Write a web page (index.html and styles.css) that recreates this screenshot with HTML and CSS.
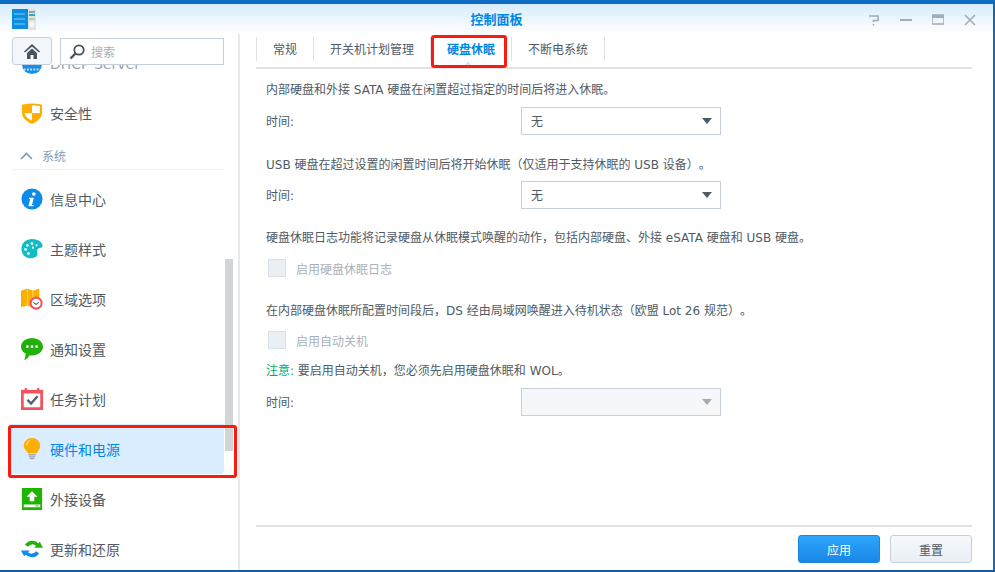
FILE: index.html
```html
<!DOCTYPE html>
<html lang="en">
<head>
    <meta charset="UTF-8">
    <meta name="viewport" content="width=device-width, initial-scale=1.0">
    <title>控制面板</title>
    <link rel="stylesheet" href="styles.css">
</head>
<body>
    <div class="window">
        <div class="titlebar">
            <svg class="app-icon" width="24" height="21" viewBox="0 0 24 21">
                <rect x="0" y="0" width="16" height="20" fill="#0a8fe0"/>
                <path d="M2 5h11M2 10h11M2 15h11" stroke="#7fd0f5" stroke-width="1"/>
                <rect x="16" y="0" width="8" height="21" fill="#dfe3e6"/>
                <path d="M17 3h6" stroke="#555" stroke-width="1"/>
                <path d="M17 6h6" stroke="#2aa6dd" stroke-width="2"/>
                <path d="M17 10h6" stroke="#8cc63f" stroke-width="1"/>
                <circle cx="20" cy="15.500" r="2.700" fill="#f4f6f7"/>
            </svg>
            <div class="title">控制面板</div>
            <div class="win-buttons">
                <svg width="12" height="12" viewBox="0 0 12 12"><path d="M1 2h9v4.500H5.500v1.500M5.500 10v1.500" fill="none" stroke="#a3abb3" stroke-width="1.500"/></svg>
                <svg width="12" height="12" viewBox="0 0 12 12"><path d="M0 6h12" stroke="#a3abb3" stroke-width="2"/></svg>
                <svg width="12" height="12" viewBox="0 0 12 12"><path d="M0 1h12v9H0z" fill="none" stroke="#a3abb3" stroke-width="1.500"/><path d="M0 2.500h12" stroke="#a3abb3" stroke-width="3"/></svg>
                <svg width="12" height="12" viewBox="0 0 12 12"><path d="M1 1l10 10M11 1L1 11" stroke="#a3abb3" stroke-width="1.500"/></svg>
            </div>
        </div>
        <div class="main">
            <aside class="sidebar">
                <div class="toolbar">
                    <button class="home-btn">
                        <svg width="16" height="15" viewBox="0 0 16 15"><path d="M8 0L0 7.500l1 1L8 2.500l7 6 1-1zM3 9l5-4.500L13 9v6H9.500v-4h-3v4H3z" fill="#47525e"/></svg>
                    </button>
                    <div class="search">
                        <svg width="16" height="16" viewBox="0 0 16 16"><circle cx="10" cy="6" r="4.700" fill="none" stroke="#47525e" stroke-width="1.800"/><path d="M6.500 9.500L1.500 14.500" stroke="#47525e" stroke-width="2.400"/></svg>
                        <span>搜索</span>
                    </div>
                </div>
                <ul class="nav">
                    <li class="nav-item">
                        <svg class="nav-icon" viewBox="0 0 24 24"><circle cx="12" cy="12" r="11" fill="#1b8fe6"/><path d="M3 18h18" stroke="#bfe2fa" stroke-width="2" stroke-dasharray="2 1.500"/></svg>
                        <span class="nav-latin">DHCP Server</span>
                    </li>
                    <li class="nav-item nav-before-group">
                        <svg class="nav-icon" viewBox="0 0 24 24"><path d="M1 3q11-3 22 0v9q0 7-11 12Q1 19 1 12z" fill="#fcaf03"/><path d="M12 3.500q5.500 0 8.500 1.200V12h-8.500zM12 12v8.500Q4.500 17 3.800 12z" fill="#fff"/></svg>
                        <span>安全性</span>
                    </li>
                    <li class="nav-group">
                        <svg width="13" height="8" viewBox="0 0 13 8"><path d="M1 7l5.500-5.500L12 7" fill="none" stroke="#7e9bb3" stroke-width="1.600"/></svg>
                        <span>系统</span>
                    </li>
                    <li class="nav-item">
                        <svg class="nav-icon" viewBox="0 0 24 24"><circle cx="12" cy="12" r="11.500" fill="#0b8bea"/><circle cx="14" cy="6.500" r="2" fill="#fff"/><path d="M9 10.500h5l-2 8h2l-.5 1.500H8l2-8H8.500z" fill="#fff"/></svg>
                        <span>信息中心</span>
                    </li>
                    <li class="nav-item">
                        <svg class="nav-icon" viewBox="0 0 24 24"><path d="M12 1c6 0 11.500 3.500 11.500 7.500 0 3-5.500 2-6 4.500-.5 3 1.500 4.500-.5 7-2 2-4 2-7 2-5.500 0-9.500-4-9.500-10.500S6 1 12 1z" fill="#0fbdc4"/><circle cx="7" cy="8" r="1.500" fill="#fff"/><circle cx="12" cy="6" r="1.500" fill="#fff"/><circle cx="5" cy="12.500" r="1.500" fill="#fff"/><circle cx="13" cy="10.500" r="1.200" fill="#fff"/><circle cx="8" cy="17" r="1.500" fill="#fff"/><circle cx="17" cy="8" r="1.200" fill="#fff"/></svg>
                        <span>主题样式</span>
                    </li>
                    <li class="nav-item">
                        <svg class="nav-icon" viewBox="0 0 24 24"><path d="M0 3l7-2.500 6 2.500 7-2.500v10H13v11L7 19l-7 2z" fill="#fcaf03"/><path d="M7 .5V19M13 3v10" stroke="#ffd66b" stroke-width="1"/><circle cx="16.500" cy="16.500" r="6" fill="#fff" stroke="#f2545b" stroke-width="2.200"/><path d="M13.500 15.500L16.500 18 19.500 15.500" fill="none" stroke="#6a7682" stroke-width="1.300"/></svg>
                        <span>区域选项</span>
                    </li>
                    <li class="nav-item">
                        <svg class="nav-icon" viewBox="0 0 24 24"><path d="M12 0c6.500 0 12 4 12 9.500S18.500 19 12 19c-1 0-1.500 0-2.500-.2C8 21 5.500 24 3.500 24c1-2 1.500-4.500 1.500-7C2 15.500 0 13 0 9.500 0 4 5.500 0 12 0z" fill="#23b00a"/><circle cx="7" cy="9.500" r="1.500" fill="#fff"/><circle cx="12" cy="9.500" r="1.500" fill="#fff"/><circle cx="17" cy="9.500" r="1.500" fill="#fff"/></svg>
                        <span>通知设置</span>
                    </li>
                    <li class="nav-item">
                        <svg class="nav-icon" viewBox="0 0 24 24"><rect x="0" y="2" width="24" height="22" fill="#f5535b"/><rect x="3" y="6" width="18" height="15" fill="#fff"/><rect x="4" y="0" width="2.500" height="5" fill="#f5535b"/><rect x="17.500" y="0" width="2.500" height="5" fill="#f5535b"/><path d="M7 13l4 4 7-8" fill="none" stroke="#56606c" stroke-width="2.600"/></svg>
                        <span>任务计划</span>
                    </li>
                    <li class="nav-item active">
                        <svg class="nav-icon" viewBox="0 0 24 24"><path d="M12 0c5 0 9 3.800 9 8.500 0 3.500-2.500 5.500-4 8.500H8C6 14 3 12 3 8.500 3 3.800 7 0 12 0z" fill="#fcaf03"/><path d="M5.500 8C6 4.500 8 2.500 11 2 8.500 3.500 7.500 5 7 8z" fill="#ffe08a"/><path d="M8 18.500h8M8.500 20.500h7M10 22.500h4" stroke="#9aa1a9" stroke-width="1.300"/></svg>
                        <span>硬件和电源</span>
                    </li>
                    <li class="nav-item">
                        <svg class="nav-icon" viewBox="0 0 24 24"><rect x="1" y="0" width="22" height="24" fill="#1fb400"/><path d="M12 3.500l6 6h-3.500v5h-5v-5H6z" fill="#fff"/><rect x="3" y="18" width="18" height="3" fill="#fff"/><rect x="16" y="19" width="3" height="1" fill="#1fb400"/></svg>
                        <span>外接设备</span>
                    </li>
                    <li class="nav-item">
                        <svg class="nav-icon" viewBox="0 0 24 24"><path d="M6 8.500A7.500 7.500 0 0 1 18 7.500" fill="none" stroke="#23b00a" stroke-width="4"/><path d="M14.500 10.500H24L20.500 4z" fill="#23b00a"/><path d="M18 15.500A7.500 7.500 0 0 1 6 16.500" fill="none" stroke="#0b8bea" stroke-width="4"/><path d="M9.500 13.500H0L3.500 20z" fill="#0b8bea"/></svg>
                        <span>更新和还原</span>
                    </li>
                </ul>
                <div class="scrollbar"></div>
                <div class="mark mark-nav"></div>
            </aside>
            <section class="content">
                <div class="tabs">
                    <div class="tab">常规</div>
                    <div class="tab">开关机计划管理</div>
                    <div class="tab tab-active">硬盘休眠<i class="tab-arrow"></i><div class="mark mark-tab"></div></div>
                    <div class="tab">不断电系统</div>
                </div>
                <div class="form">
                    <p class="line">内部硬盘和外接 SATA 硬盘在闲置超过指定的时间后将进入休眠。</p>
                    <div class="field">
                        <label>时间:</label>
                        <div class="select"><span>无</span><i class="caret"></i></div>
                    </div>
                    <p class="line gap-usb">USB 硬盘在超过设置的闲置时间后将开始休眠（仅适用于支持休眠的 USB 设备）。</p>
                    <div class="field field-usb">
                        <label>时间:</label>
                        <div class="select"><span>无</span><i class="caret"></i></div>
                    </div>
                    <p class="line gap-log">硬盘休眠日志功能将记录硬盘从休眠模式唤醒的动作，包括内部硬盘、外接 eSATA 硬盘和 USB 硬盘。</p>
                    <div class="check"><i class="box"></i><span>启用硬盘休眠日志</span></div>
                    <p class="line gap-wol">在内部硬盘休眠所配置时间段后，DS 经由局域网唤醒进入待机状态（欧盟 Lot 26 规范）。</p>
                    <div class="check check-off"><i class="box"></i><span>启用自动关机</span></div>
                    <p class="line gap-note"><span class="note">注意:</span> 要启用自动关机，您必须先启用硬盘休眠和 WOL。</p>
                    <div class="field">
                        <label>时间:</label>
                        <div class="select disabled"><i class="caret"></i></div>
                    </div>
                </div>
                <div class="footer">
                    <button class="btn btn-primary">应用</button>
                    <button class="btn">重置</button>
                </div>
            </section>
        </div>
    </div>
</body>
</html>
```

FILE: styles.css
```css
html, body {
    margin: 0;
    height: 100%;
    overflow: hidden;
}
body {
    font-family: "DejaVu Sans", "Noto Sans CJK SC", sans-serif;
    font-size: 12px;
    color: #505a64;
    background: white;
    text-spacing-trim: space-all;
}
.window {
    box-sizing: border-box;
    height: 572px;
    display: flex;
    flex-direction: column;
    border-top: 4px solid #0f6cc4;
    border-right: 2px solid #1667b0;
    border-bottom: 2px solid #1b5aa0;
    background: white;
}
.titlebar {
    flex: none;
    height: 30px;
    display: grid;
    grid-template-columns: 1fr auto 1fr;
    align-items: center;
    padding-left: 12px;
    background: linear-gradient(#d6ecfd, #ffffff);
}
.app-icon {
    margin-top: 1px;
}
.title {
    font-size: 13px;
    font-weight: bold;
    color: #0086e5;
    padding-bottom: 2px;
    margin-left: -12px;
}
.win-buttons {
    display: flex;
    justify-content: flex-end;
    gap: 20px;
    padding-right: 17px;
    margin-top: 2px;
}
.main {
    flex: 1;
    display: flex;
    min-height: 0;
}
.sidebar {
    flex: none;
    width: 238px;
    position: relative;
    overflow: hidden;
    border-right: 2px solid #e6e8ea;
}
.toolbar {
    position: absolute;
    top: 0;
    left: 0;
    right: 0;
    height: 31px;
    display: flex;
    gap: 8px;
    padding-left: 12px;
    padding-right: 14px;
    background: white;
    z-index: 1;
}
.home-btn {
    box-sizing: border-box;
    width: 40px;
    height: 28px;
    margin: 3px 0 0;
    padding: 0;
    border: 1px solid #c6d0dc;
    border-radius: 3px;
    background: #f3f6fa;
    display: flex;
    align-items: center;
    justify-content: center;
}
.search {
    box-sizing: border-box;
    width: 164px;
    height: 27px;
    margin-top: 4px;
    display: flex;
    align-items: center;
    gap: 6px;
    padding-left: 8px;
    border: 1px solid #c6d0dc;
    background: white;
    color: #a8afb6;
}
.nav {
    list-style: none;
    margin: 0;
    padding: 5px 0 0;
}
.nav-item {
    height: 50px;
    display: flex;
    align-items: center;
    gap: 7px;
    margin-left: 9px;
    margin-right: 14px;
    padding-left: 12px;
    font-size: 14px;
    box-sizing: border-box;
}
.nav-icon {
    width: 22px;
    height: 22px;
    flex: none;
    margin-top: -1px;
}
.nav-before-group {
    padding-bottom: 2px;
}
.nav-latin {
    color: #9aa3ab;
}
.nav-group {
    height: 31px;
    box-sizing: border-box;
    margin: 0 14px 4px 12px;
    padding-left: 8px;
    padding-top: 3px;
    display: flex;
    align-items: center;
    gap: 9px;
    color: #7e9bb3;
    border-bottom: 1px solid #eceef0;
}
.active {
    background: #d9edfe;
    color: #0086e5;
    border-radius: 0 0 3px 0;
}
.scrollbar {
    position: absolute;
    left: 225px;
    top: 225px;
    width: 8px;
    height: 192px;
    background: #d2d4d6;
}
.mark {
    position: absolute;
    box-sizing: border-box;
    border: 3px solid #fb1a10;
    border-radius: 3px;
    pointer-events: none;
}
.mark-nav {
    left: 8px;
    top: 391px;
    width: 229px;
    height: 53px;
}
.content {
    flex: 1;
    min-width: 0;
    padding: 0 21px 0 16px;
    display: flex;
    flex-direction: column;
}
.tabs {
    flex: none;
    height: 30px;
    display: flex;
    border-bottom: 2px solid #e1e3e5;
    padding-top: 3px;
}
.tab {
    position: relative;
    height: 24px;
    line-height: 26px;
    padding: 0 16px;
    border-right: 1px solid #dfe3e7;
    color: #505a64;
}
.tabs .tab:first-child {
    border-left: 1px solid #dfe3e7;
}
.tab-active {
    color: #0086e5;
    font-weight: bold;
}
.tab-arrow {
    position: absolute;
    left: 33px;
    top: 24px;
    border-left: 4px solid transparent;
    border-right: 4px solid transparent;
    border-bottom: 5px solid #dfe3e7;
}
.mark-tab {
    left: 0;
    top: -2px;
    right: 4px;
    height: 33px;
}
.form {
    flex: 1;
    padding-left: 10px;
}
.line {
    margin: 0;
    line-height: 18px;
    padding-top: 12px;
}
.gap-usb { padding-top: 21px; }
.gap-log { padding-top: 20px; }
.gap-wol { padding-top: 25px; }
.gap-note { padding-top: 13px; }
.field {
    display: flex;
    align-items: center;
    height: 28px;
    margin-top: 8px;
}
.field-usb {
    margin-top: 7px;
}
.field label {
    width: 255px;
    padding-bottom: 2px;
}
.select {
    box-sizing: border-box;
    width: 200px;
    height: 28px;
    display: flex;
    align-items: center;
    padding-left: 9px;
    border: 1px solid #c6d0dc;
    position: relative;
}
.select span {
    padding-bottom: 2px;
}
.caret {
    position: absolute;
    right: 8px;
    top: 10px;
    border-left: 5px solid transparent;
    border-right: 5px solid transparent;
    border-top: 6px solid #505a64;
}
.disabled {
    background: #f5f7f9;
}
.disabled .caret {
    border-top-color: #a3abb3;
}
.check {
    display: flex;
    align-items: center;
    height: 18px;
    margin-top: 12px;
    color: #aab1b8;
}
.check-off {
    margin-top: 11px;
}
.box {
    box-sizing: border-box;
    width: 18px;
    height: 18px;
    margin: 0 10px 0 2px;
    border: 1px solid #d9e1ea;
    background: #eaeff4;
}
.note {
    color: #00a86b;
}
.footer {
    flex: none;
    box-sizing: border-box;
    height: 45px;
    display: flex;
    justify-content: flex-end;
    gap: 10px;
    padding-top: 8px;
    border-top: 2px solid #e1e3e5;
}
.btn {
    box-sizing: border-box;
    width: 82px;
    height: 28px;
    font-family: inherit;
    font-size: 12px;
    color: #505a64;
    border: 1px solid #c6d0dc;
    border-radius: 3px;
    background: linear-gradient(#f5f9fd, #e9eff5);
}
.btn-primary {
    color: white;
    border-color: #1a86dd;
    background: linear-gradient(#2fa6fb, #1887e6);
}
```
